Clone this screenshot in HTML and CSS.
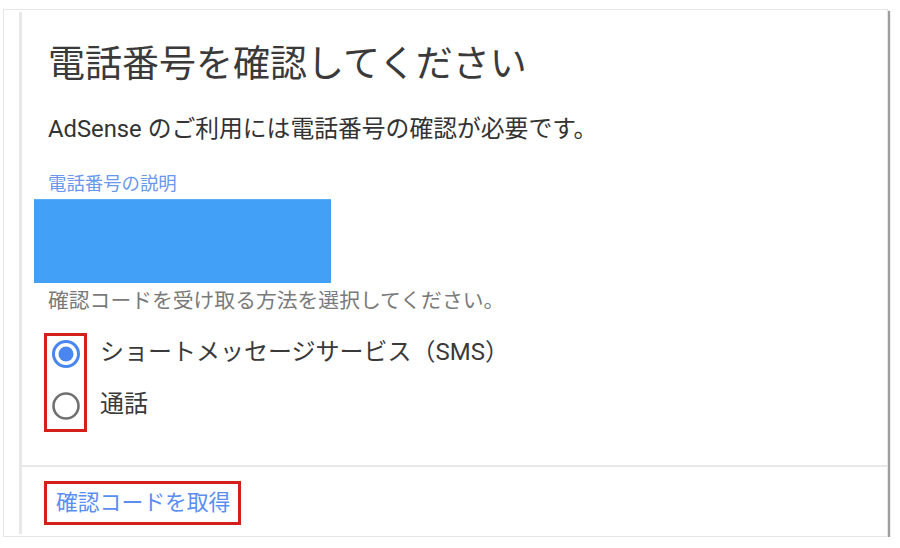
FILE: index.html
```html
<!DOCTYPE html>
<html lang="ja">
<head>
<meta charset="utf-8">
<link rel="stylesheet" href="styles.css">
</head>
<body>
<div class="frame">
  <div class="panel">
    <div class="content">
      <h1 class="title">電話番号を確認してください</h1>
      <p class="lead">AdSense のご利用には電話番号の確認が必要です。</p>
      <div class="label">電話番号の説明</div>
      <div class="masked"></div>
      <p class="hint">確認コードを受け取る方法を選択してください。</p>
      <div class="options">
        <div class="radios">
          <svg class="radio" viewBox="0 0 30 30" width="30" height="30"><circle cx="15" cy="15" r="12.5" fill="none" stroke="#4a86f0" stroke-width="3"/><circle cx="15" cy="15" r="7.5" fill="#4a86f0"/></svg>
          <svg class="radio" viewBox="0 0 30 30" width="30" height="30"><circle cx="15" cy="15" r="12.5" fill="none" stroke="#707070" stroke-width="2.6"/></svg>
        </div>
        <div class="labels">
          <div class="opt">ショートメッセージサービス（SMS）</div>
          <div class="opt">通話</div>
        </div>
      </div>
    </div>
    <div class="footer">
      <a class="action" href="#">確認コードを取得</a>
    </div>
  </div>
</div>
</body>
</html>
```
FILE: styles.css
```css
html, body {
  margin: 0;
  padding: 0;
  background: #fff;
}
body {
  font-family: Roboto, "Noto Sans CJK JP", sans-serif;
  color: #333;
}
.frame {
  margin: 9px 0 0 3px;
  width: 885px;
  height: 528px;
  border: 1px solid #e6e6e6;
  box-shadow: 2px 2px 1px rgba(0, 0, 0, 0.38);
  display: flex;
  box-sizing: border-box;
}
.panel {
  margin: 2px 0 2px 15px;
  border-left: 3px solid #e8e8e8;
  flex: 1;
  display: flex;
  flex-direction: column;
}
.content {
  padding: 0 0 0 26px;
  flex: 1;
}
.title {
  margin: 29px 0 0 0;
  font-size: 37px;
  font-weight: 400;
  line-height: 48px;
  color: #3a3a3a;
}
.lead {
  margin: 24px 0 0 0;
  font-size: 23.8px;
  line-height: 32px;
  color: #333;
}
.label {
  margin-top: 27px;
  font-size: 18.4px;
  line-height: 24px;
  color: #6a98ec;
}
.masked {
  margin: 3px 0 0 -14px;
  width: 297px;
  height: 84px;
  background: #42a0f6;
  border-top: 1px solid #5aaef8;
  box-sizing: border-box;
}
.hint {
  margin: 6px 0 0 0;
  font-size: 20.8px;
  line-height: 24px;
  color: #7a7a7a;
}
.options {
  margin-top: 20px;
  display: flex;
  margin-left: -4px;
}
.radios {
  border: 3px solid #d3201a;
  padding: 3px 0 0 0;
  display: flex;
  flex-direction: column;
  gap: 22px;
  width: 43px;
  height: 99px;
  box-sizing: border-box;
  align-items: center;
}
.radio {
  display: block;
}
.labels {
  margin-left: 13px;
  display: flex;
  flex-direction: column;
  padding-top: 3px;
  gap: 20px;
}
.opt {
  font-size: 24px;
  line-height: 32px;
  color: #3a3a3a;
}
.footer {
  border-top: 2px solid #e8e8e8;
  height: 69px;
  box-sizing: border-box;
  padding: 14px 0 0 22px;
}
.action {
  display: inline-block;
  border: 3px solid #d3201a;
  padding: 0 8px 0 9px;
  height: 44px;
  box-sizing: border-box;
  line-height: 38px;
  font-size: 21.8px;
  color: #5a8ef0;
  text-decoration: none;
}
```
